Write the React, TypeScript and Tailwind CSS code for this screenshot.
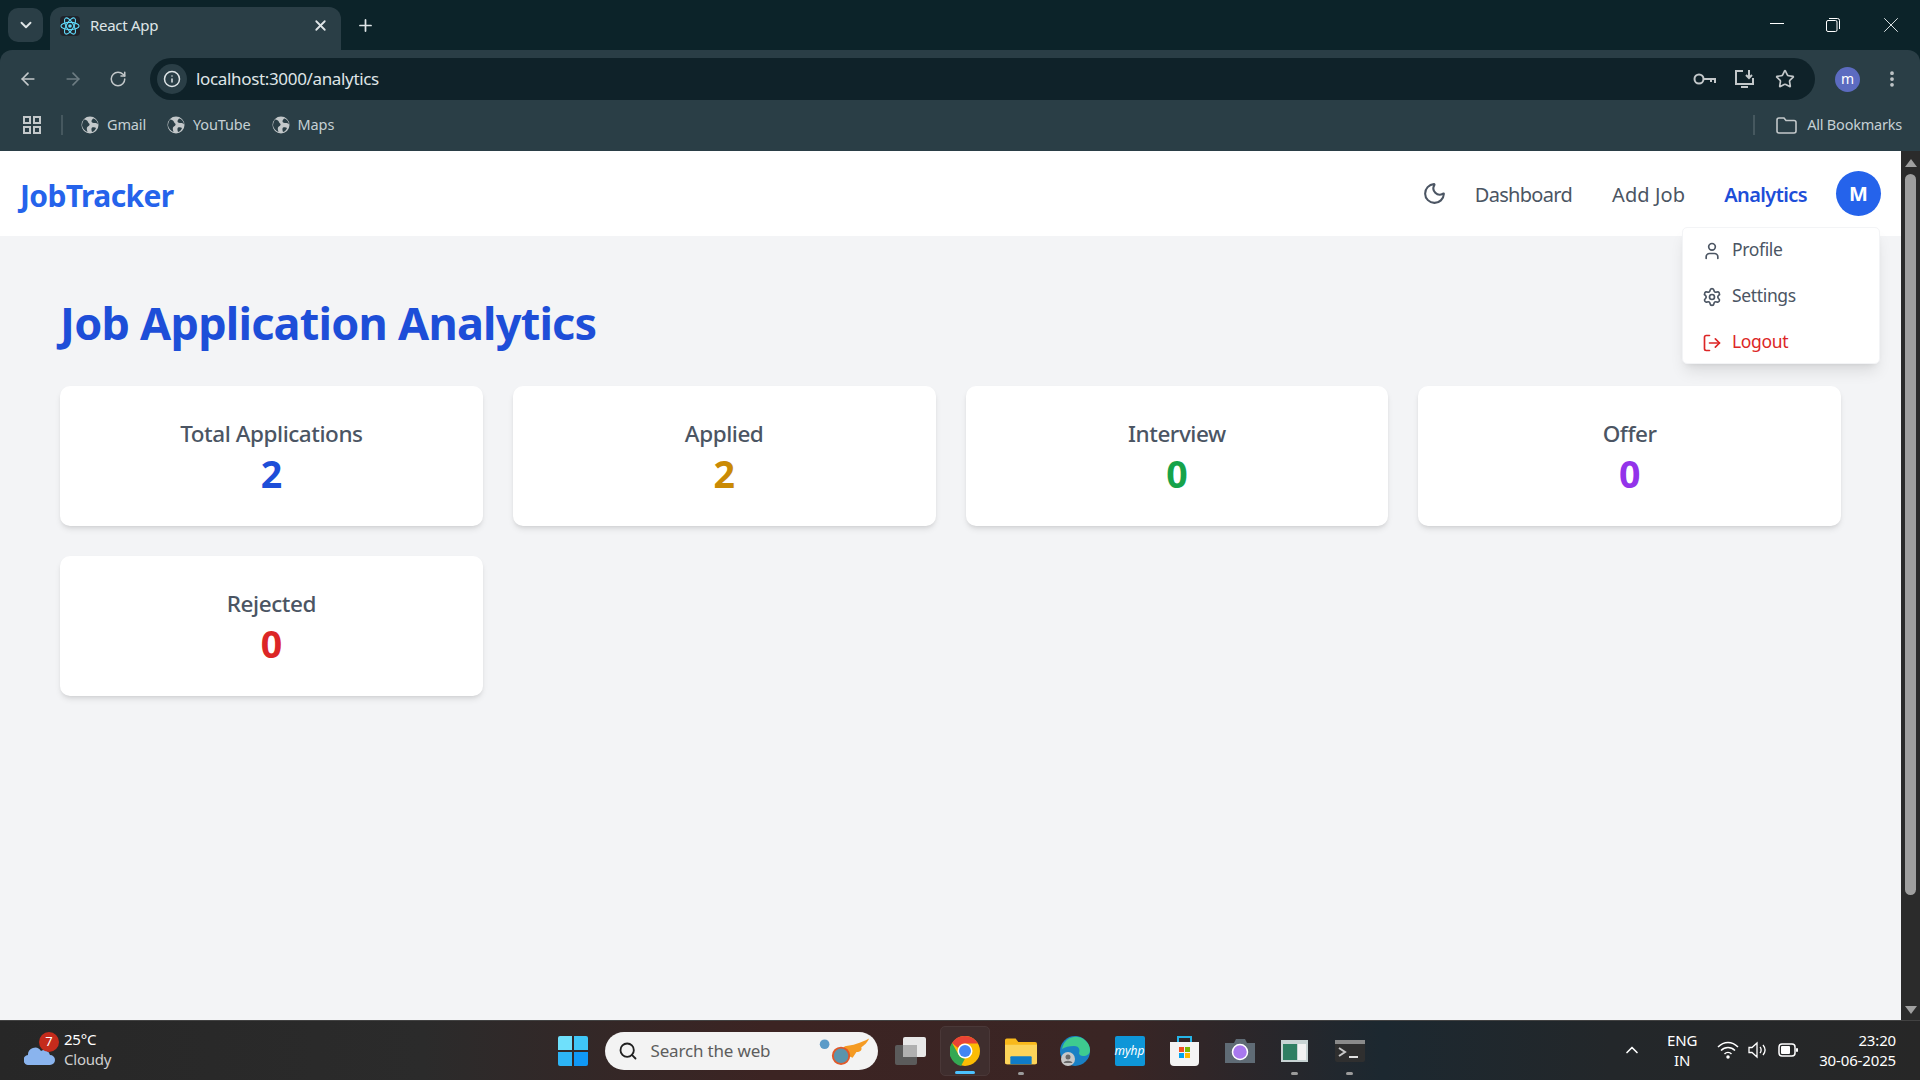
import { FC } from 'react'
import {
  ArrowLeft,
  ArrowRight,
  ChevronDown,
  ChevronUp,
  Info,
  LogOut,
  Moon,
  MoreVertical,
  Plus,
  RotateCw,
  Search,
  Settings,
  Star,
  User,
  X
} from 'lucide-react'

const FONT = 'font-["Noto_Sans","Open_Sans",sans-serif]'

const stats = [
  { label: 'Total Applications', value: 2, color: 'text-[#1d4ed8]' },
  { label: 'Applied', value: 2, color: 'text-[#ca8a04]' },
  { label: 'Interview', value: 0, color: 'text-[#16a34a]' },
  { label: 'Offer', value: 0, color: 'text-[#9333ea]' },
  { label: 'Rejected', value: 0, color: 'text-[#dc2626]' }
]

const GlobeIcon: FC = () => (
  <svg width="18" height="18" viewBox="0 0 18 18">
    <circle cx="9" cy="9" r="8.5" fill="#c3c8ca" />
    <path
      d="M3 3.5c2 0 3.5 1 4 2.5s2 1.5 1.5 3-2 1-2.5 2.5 0 2.5.5 4.5C4 15 1.5 12.500 1 9.500c0-2 1-4.500 2-6zM12 2.500c-.5 1-1.500 1.500-1.500 3s2 1.500 3.500 1.500 2.500.5 3 1.500c0-2.500-2-5.500-5-6zM11 11.500c1.500-.5 3-.5 4 .5-.5 1.500-2 3.500-4 4-.5-1.500-1-3.500 0-4.500z"
      fill="#2a3e46"
    />
  </svg>
)

const ReactLogo: FC = () => (
  <span className="flex h-5 w-5 items-center justify-center rounded-sm bg-[#20232a]">
    <svg width="20" height="20" viewBox="-11 -11 22 22" fill="none" stroke="#61dafb" strokeWidth="1.200">
      <circle r="2" fill="#61dafb" stroke="none" />
      <ellipse rx="10" ry="4" />
      <ellipse rx="10" ry="4" transform="rotate(60)" />
      <ellipse rx="10" ry="4" transform="rotate(120)" />
    </svg>
  </span>
)

const BrowserChrome: FC = () => (
  <div className="flex h-[151px] shrink-0 flex-col bg-[#0c2329] text-[#dfe5e7]">
    <div className="flex h-[50px] items-end pl-2">
      <div className="mb-[8px] flex h-[34px] w-[35px] items-center justify-center rounded-[10px] bg-[#2a3e46]">
        <ChevronDown size={18} strokeWidth={2.5} />
      </div>
      <div className="ml-[7px] flex h-[43px] w-[291px] items-center rounded-t-[12px] bg-[#2a3e46] pb-[6px] pl-[10px] pr-[12px]">
        <ReactLogo />
        <span className="ml-[10px] flex-1 text-[15px] tracking-[-0.02em]">React App</span>
        <X size={17} strokeWidth={2.5} />
      </div>
      <div className="mb-[12px] ml-[15px] flex flex-1 items-center justify-between">
        <Plus size={19} strokeWidth={2.2} />
        <div className="flex items-center pr-[16px]">
          <div className="mb-[3px] h-[1px] w-[14px] bg-white" />
          <svg className="ml-[42px]" width="14" height="14" viewBox="0 0 14 14" fill="none" stroke="white" strokeWidth="1">
            <rect x="0.500" y="2.500" width="10.500" height="11" rx="1.500" />
            <path d="M3 .5h8.500a2 2 0 0 1 2 2V11" />
          </svg>
          <X className="ml-[38px]" size={26} strokeWidth={0.9} />
        </div>
      </div>
    </div>
    <div className="flex flex-1 flex-col rounded-t-[12px] bg-[#2a3e46]">
      <div className="mt-[8px] flex h-[42px] items-center pl-[18px] pr-[18px]">
        <ArrowLeft size={20} className="text-[#c3c8ca]" />
        <ArrowRight size={20} className="ml-[25px] text-[#6d7c82]" />
        <RotateCw size={18} className="ml-[26px] text-[#c3c8ca]" />
        <div className="ml-[23px] flex h-[42px] flex-1 items-center rounded-full bg-[#0f2229] pl-[7px] pr-[20px]">
          <span className="flex h-[30px] w-[30px] items-center justify-center rounded-full bg-[#2a3e46]">
            <Info size={18} />
          </span>
          <span className="ml-[9px] flex-1 text-[17px] tracking-[-0.02em]">localhost:3000/analytics</span>
          <svg width="24" height="14" viewBox="0 0 24 14" fill="none" stroke="#c3c8ca" strokeWidth="2">
            <circle cx="6" cy="7" r="4.500" />
            <path d="M11 7h11v4M18 7v3" />
          </svg>
          <svg className="ml-[17px]" width="22" height="20" viewBox="0 0 22 20" fill="none" stroke="#c3c8ca" strokeWidth="2">
            <path d="M9 2H2v13h17v-6M7 18h7M15 1v8M12 6l3 3 3-3" />
          </svg>
          <Star className="ml-[19px] text-[#c3c8ca]" size={20} strokeWidth={2} />
        </div>
        <span className="ml-[20px] flex h-[25px] w-[25px] items-center justify-center rounded-full bg-[#5c6bc0] pb-[2px] text-[14px] text-white">
          m
        </span>
        <MoreVertical size={20} className="ml-[22px] text-[#c3c8ca]" strokeWidth={2.5} />
      </div>
      <div className="flex flex-1 items-center pb-[1px] pl-[23px] pr-[18px] text-[14.500px] tracking-[-0.01em] text-[#c5d0d4]">
        <svg width="18" height="18" viewBox="0 0 18 18" fill="none" stroke="#c3c8ca" strokeWidth="2">
          <rect x="1" y="1" width="6" height="6" />
          <rect x="11" y="1" width="6" height="6" />
          <rect x="1" y="11" width="6" height="6" />
          <rect x="11" y="11" width="6" height="6" />
        </svg>
        <div className="ml-[20px] h-[20px] w-[2px] bg-[#46585f]" />
        <div className="ml-[18px] flex items-center gap-[8px]">
          <GlobeIcon />
          Gmail
        </div>
        <div className="ml-[21px] flex items-center gap-[8px]">
          <GlobeIcon />
          YouTube
        </div>
        <div className="ml-[21px] flex items-center gap-[8px]">
          <GlobeIcon />
          Maps
        </div>
        <div className="ml-auto h-[20px] w-[2px] bg-[#46585f]" />
        <svg className="ml-[21px]" width="21" height="17" viewBox="0 0 21 17" fill="none" stroke="#c3c8ca" strokeWidth="1.600">
          <path d="M1 3a2 2 0 0 1 2-2h5l2 2.500h8a2 2 0 0 1 2 2V14a2 2 0 0 1-2 2H3a2 2 0 0 1-2-2z" />
        </svg>
        <span className="ml-[10px] tracking-[-0.015em]">All Bookmarks</span>
      </div>
    </div>
  </div>
)

const NavBar: FC = () => (
  <nav className="relative flex h-[85px] shrink-0 items-center bg-white pl-[20px] pr-[20px]">
    <span className="pt-[4px] text-[30px] font-bold tracking-[-0.02em] text-[#2563eb]">JobTracker</span>
    <div className="ml-auto flex items-center text-[20px] text-[#4b5563]">
      <Moon size={25} className="mb-[1px]" />
      <span className="ml-[28px] mt-[2px] tracking-[-0.035em]">Dashboard</span>
      <span className="ml-[40px] mt-[2px] tracking-[0.005em]">Add Job</span>
      <span className="ml-[39px] mt-[2px] font-semibold tracking-[-0.03em] text-[#1d4ed8]">Analytics</span>
      <span className="ml-[29px] flex h-[45px] w-[45px] items-center justify-center rounded-full bg-[#2563eb] text-[20px] font-bold text-white">
        M
      </span>
    </div>
    <div className="absolute right-[21px] top-[76px] z-10 flex h-[137px] w-[198px] flex-col justify-center gap-[20px] rounded-[5px] border border-gray-100 bg-white pl-[19px] pt-[3px] text-[17.500px] tracking-[-0.02em] text-[#4b5563] shadow-lg">
      <div className="flex h-[26px] items-center gap-[10px]">
        <User size={20} />
        <span className="mb-[3px]">Profile</span>
      </div>
      <div className="flex h-[26px] items-center gap-[10px]">
        <Settings size={20} />
        <span className="mb-[3px]">Settings</span>
      </div>
      <div className="flex h-[26px] items-center gap-[10px] text-[#dc2626]">
        <LogOut size={20} />
        <span className="mb-[3px]">Logout</span>
      </div>
    </div>
  </nav>
)

const Scrollbar: FC = () => (
  <div className="flex w-[19px] shrink-0 flex-col items-center bg-[#2b2b2b] pt-[8px]">
    <div className="h-0 w-0 border-x-[6px] border-b-[8px] border-x-transparent border-b-[#a0a0a0]" />
    <div className="mt-[7px] h-[721px] w-[11px] rounded-full bg-[#9f9f9f]" />
    <div className="mt-auto mb-[6px] h-0 w-0 border-x-[6px] border-t-[8px] border-x-transparent border-t-[#a0a0a0]" />
  </div>
)

const StatCard: FC<{ label: string; value: number; color: string }> = ({ label, value, color }) => (
  <div className="flex h-[140px] flex-col items-center justify-center rounded-[10px] bg-white pt-[4px] shadow-md">
    <span className="text-[22.500px] font-medium leading-[30px] tracking-[-0.02em] text-[#4b5563]">{label}</span>
    <span className={`mt-[1px] text-[37.500px] font-bold leading-[48px] ${color}`}>{value}</span>
  </div>
)

const TrayIcons: FC = () => (
  <div className="flex items-center gap-[9px]">
    <svg width="22" height="18" viewBox="0 0 22 18" fill="none" stroke="white" strokeWidth="1.500">
      <path d="M1 6c6-6 14-6 20 0M4 9.500c4-4 10-4 14 0M7.500 13c2-2 5-2 7 0" />
      <circle cx="11" cy="16" r="1" fill="white" />
    </svg>
    <svg width="21" height="18" viewBox="0 0 21 18" fill="none" stroke="white" strokeWidth="1.300">
      <path d="M1 6.500h3L9 2v14l-5-4.500H1zM12 6c1.500 1.500 1.500 4.500 0 6M15 4c2.500 3 2.500 7 0 10" />
    </svg>
    <svg width="20" height="14" viewBox="0 0 20 14">
      <rect x="1" y="1" width="16" height="12" rx="3" fill="none" stroke="white" strokeWidth="1.500" />
      <rect x="3" y="3" width="9" height="8" rx="1" fill="white" />
      <rect x="18" y="5" width="2" height="4" rx="1" fill="white" />
    </svg>
  </div>
)

const TaskbarApps: FC = () => (
  <div className="flex items-center pl-[2px]">
    <svg width="30" height="30" viewBox="0 0 30 30">
      <path d="M0 2a2 2 0 0 1 2-2h12v14H0z" fill="#6fe0fb" />
      <path d="M16 0h12a2 2 0 0 1 2 2v12H16z" fill="#3fc6f7" />
      <path d="M0 16h14v14H2a2 2 0 0 1-2-2z" fill="#2db4f5" />
      <path d="M16 16h14v12a2 2 0 0 1-2 2H16z" fill="#1098f5" />
    </svg>
    <div className="ml-[17px] flex h-[38px] w-[273px] items-center rounded-full bg-[#f3f3f3] pl-[13px] pr-[8px] text-[17px] text-[#5d5d5d]">
      <Search size={20} strokeWidth={2.2} className="text-[#202020]" />
      <span className="ml-[13px] flex-1 tracking-[-0.01em]">Search the web</span>
      <svg width="56" height="30" viewBox="0 0 58 30">
        <circle cx="11" cy="8" r="5" fill="#5b9bc8" />
        <path d="M32 10c8-1 16-3 25-8-2 5-5 7-8 9 1 3-1 5-5 5l-4 6-14-6z" fill="#f59b23" />
        <circle cx="28" cy="20" r="8.500" fill="#5a94ad" stroke="#e0592a" strokeWidth="2" />
      </svg>
    </div>
    <svg className="ml-[17px]" width="31" height="28" viewBox="0 0 31 28">
      <rect x="0" y="8" width="22" height="20" rx="2" fill="#5b5b5b" />
      <rect x="8" y="0" width="23" height="20" rx="2" fill="#e8e8e8" />
      <rect x="8" y="8" width="14" height="12" fill="#b0b0b0" />
    </svg>
    <div className="relative ml-[14px] flex h-[50px] w-[50px] items-center justify-center rounded-[5px] border border-[#4a3838] bg-[#3f2e2e]">
      <svg width="30" height="30" viewBox="0 0 30 30">
        <circle cx="15" cy="15" r="15" fill="#fbbc04" />
        <path d="M15 0a15 15 0 0 1 13 7.500H15a7.500 7.500 0 0 0-7 4.500L2 7A15 15 0 0 1 15 0z" fill="#ea4335" />
        <path d="M2 7l6.500 11.500a7.500 7.500 0 0 0 6.500 4L11 30A15 15 0 0 1 2 7z" fill="#34a853" />
        <circle cx="15" cy="15" r="7.500" fill="white" />
        <circle cx="15" cy="15" r="6" fill="#4285f4" />
      </svg>
      <span className="absolute bottom-[1px] left-[14px] h-[3px] w-[20px] rounded-full bg-[#4cc2ff]" />
    </div>
    <div className="relative ml-[15px] flex h-[50px] w-[36px] items-center">
      <svg width="32" height="28" viewBox="0 0 36 30">
        <path d="M0 3a2 2 0 0 1 2-2h10l3 4h19a2 2 0 0 1 2 2v21a2 2 0 0 1-2 2H2a2 2 0 0 1-2-2z" fill="#f9b91b" />
        <path d="M0 8h36v20a2 2 0 0 1-2 2H2a2 2 0 0 1-2-2z" fill="#fcd45a" />
        <rect x="6" y="21" width="24" height="9" rx="1" fill="#0f7cc7" />
      </svg>
      <span className="absolute bottom-[1px] left-[13px] h-[3px] w-[6px] rounded-full bg-[#9b9b9b]" />
    </div>
    <svg className="ml-[19px]" width="30" height="30" viewBox="0 0 30 30">
      <circle cx="15" cy="15" r="15" fill="#1a80c4" />
      <path d="M2 13C4 3 12 0 18 1c7 1 12 7 12 13 0 4-3 6-7 6-2 0-4-1-4-3 1-2 1-7-5-7-5 0-9 1-12 3z" fill="#3ecb8f" />
      <circle cx="8" cy="23" r="7" fill="#c8c8c8" />
      <circle cx="8" cy="21" r="2.500" fill="#6a6a6a" />
      <path d="M3.500 27c1-3 8-3 9 0z" fill="#6a6a6a" />
    </svg>
    <div className="ml-[25px] flex h-[30px] w-[30px] items-center justify-center rounded-[2px] bg-[#0e96d8] text-[12px] italic text-white">
      myhp
    </div>
    <svg className="ml-[25px]" width="29" height="30" viewBox="0 0 29 30">
      <path d="M8 6V1h13v5" fill="none" stroke="#26b5e8" strokeWidth="2" />
      <path d="M0 6h29v20a4 4 0 0 1-4 4H4a4 4 0 0 1-4-4z" fill="#f4f4f4" />
      <rect x="9" y="11" width="5" height="5" fill="#f25022" />
      <rect x="15" y="11" width="5" height="5" fill="#7fba00" />
      <rect x="9" y="17" width="5" height="5" fill="#00a4ef" />
      <rect x="15" y="17" width="5" height="5" fill="#ffb900" />
    </svg>
    <svg className="ml-[26px]" width="30" height="24" viewBox="0 0 30 24">
      <path d="M0 4h9l2-4h9l2 4h8v20H0z" fill="#5f6b75" />
      <circle cx="15" cy="13" r="7.500" fill="#a878ee" stroke="white" strokeWidth="1.500" />
    </svg>
    <div className="relative ml-[26px] flex h-[50px] w-[27px] items-center">
      <svg width="27" height="22" viewBox="0 0 27 22">
        <rect width="27" height="22" fill="#c8d4d4" />
        <rect x="2" y="4" width="14" height="16" fill="#2f7f63" />
        <rect x="17" y="4" width="8" height="16" fill="#f2f2f2" />
      </svg>
      <span className="absolute bottom-[1px] left-[10px] h-[3px] w-[7px] rounded-full bg-[#9b9b9b]" />
    </div>
    <div className="relative ml-[27px] flex h-[50px] w-[30px] items-center">
      <svg width="30" height="22" viewBox="0 0 30 22">
        <rect width="30" height="22" rx="2" fill="#2f2f2f" />
        <rect width="30" height="4" fill="#8a8a8a" />
        <path d="M4 8l6 4-6 4" fill="none" stroke="#c8c8c8" strokeWidth="2" />
        <rect x="14" y="16" width="9" height="2" fill="#e0e0e0" />
      </svg>
      <span className="absolute bottom-[1px] left-[11px] h-[3px] w-[7px] rounded-full bg-[#9b9b9b]" />
    </div>
  </div>
)

const Taskbar: FC = () => (
  <div className="grid h-[60px] shrink-0 grid-cols-[1fr_auto_1fr] items-center border-t border-[#424242] bg-[linear-gradient(90deg,#272727_0%,#2b2b2b_22%,#3c2423_40%,#3a2524_58%,#1c2830_72%,#23272a_84%,#272727_100%)] text-white">
    <div className="flex items-center pl-[24px]">
      <div className="relative h-[32px] w-[32px]">
        <svg className="absolute left-0 top-[10px]" width="31" height="20" viewBox="0 0 31 20">
          <path d="M5 20a5 5 0 0 1-1-10 7 7 0 0 1 13-4 6 6 0 0 1 9 4 5 5 0 0 1 0 10z" fill="#8ab4ee" />
        </svg>
        <span className="absolute left-[15px] top-[-3px] flex h-5 w-5 items-center justify-center rounded-full bg-[#c42b1c] text-[13px]">
          7
        </span>
      </div>
      <div className="mb-[3px] ml-[8px] flex flex-col text-[15px] leading-[20px] tracking-[-0.015em]">
        <span>25°C</span>
        <span className="text-[#cfcfcf]">Cloudy</span>
      </div>
    </div>
    <TaskbarApps />
    <div className="mb-[2px] flex items-center justify-end pr-[24px] text-[15px] leading-[20px] tracking-[-0.01em]">
      <ChevronUp size={20} />
      <div className="ml-[25px] flex flex-col items-center">
        <span>ENG</span>
        <span>IN</span>
      </div>
      <div className="ml-[20px]">
        <TrayIcons />
      </div>
      <div className="ml-[21px] flex flex-col items-end">
        <span>23:20</span>
        <span>30-06-2025</span>
      </div>
    </div>
  </div>
)

export default function App() {
  return (
    <div className={`flex h-screen flex-col overflow-hidden ${FONT}`}>
      <BrowserChrome />
      <div className="flex min-h-0 flex-1">
        <div className="flex min-w-0 flex-1 flex-col bg-[#f3f4f6]">
          <NavBar />
          <main className="px-[60px] pt-[57px]">
            <h1 className="text-[45px] font-bold leading-[60px] tracking-[-0.017em] text-[#1d4ed8]">
              Job Application Analytics
            </h1>
            <div className="mt-[33px] grid grid-cols-4 gap-[30px]">
              {stats.map(stat => (
                <StatCard key={stat.label} {...stat} />
              ))}
            </div>
          </main>
        </div>
        <Scrollbar />
      </div>
      <Taskbar />
    </div>
  )
}
